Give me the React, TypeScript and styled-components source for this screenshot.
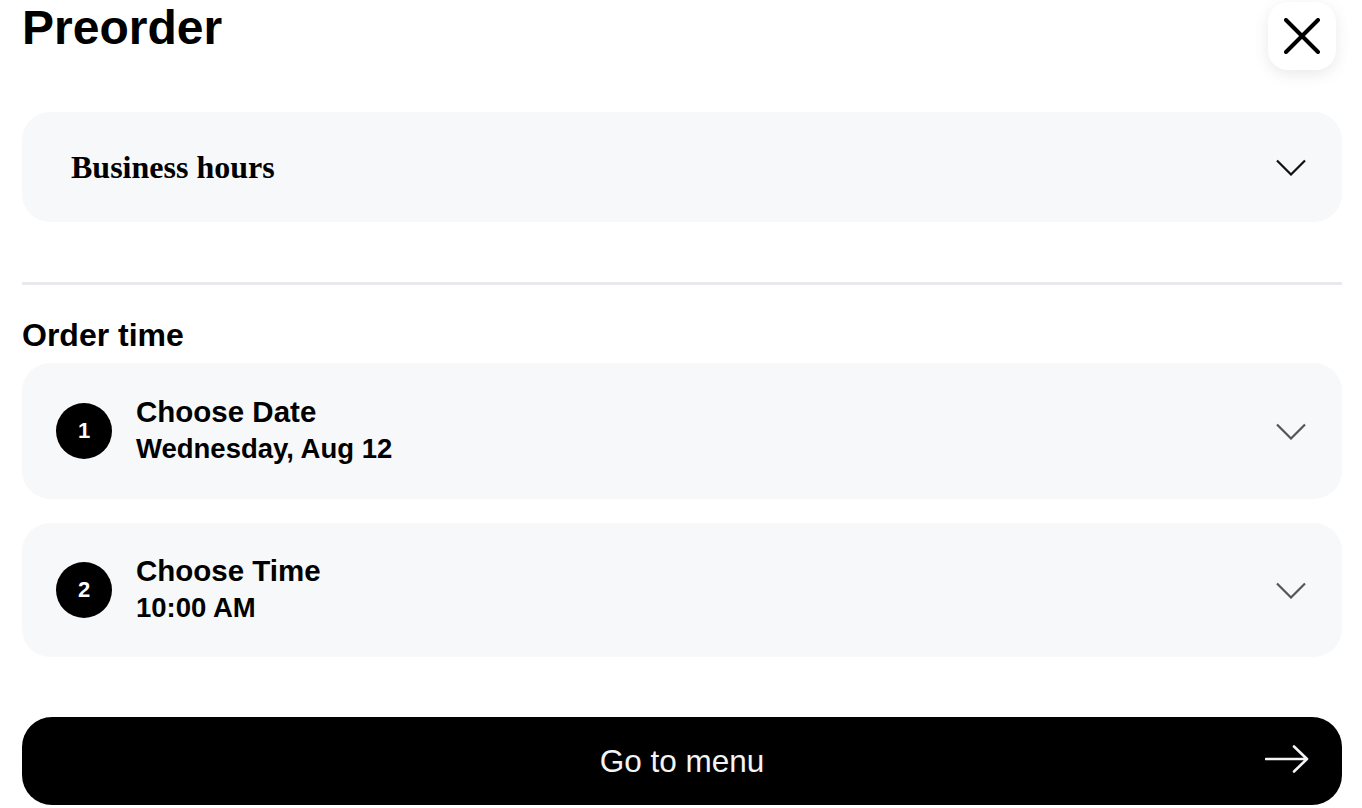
import styled, { createGlobalStyle } from "styled-components";

const GlobalStyle = createGlobalStyle`
  body {
    margin: 0;
    background: #ffffff;
    font-family: "Liberation Sans", Arial, sans-serif;
    color: #000000;
  }
`;

const Page = styled.div`
  padding: 0 20px 0 22px;
`;

const Header = styled.header`
  display: flex;
  justify-content: space-between;
  align-items: flex-start;
  height: 70px;
  margin-bottom: 42px;
`;

const Title = styled.h1`
  margin: 0;
  font-size: 48px;
  font-weight: 700;
  line-height: 55px;
`;

const CloseButton = styled.button`
  width: 68px;
  height: 68px;
  margin: 2px 6px 0 0;
  border: none;
  border-radius: 20px;
  background: #ffffff;
  box-shadow: 0 4px 16px rgba(0, 0, 0, 0.09);
  display: flex;
  align-items: center;
  justify-content: center;
  padding: 0;
  cursor: pointer;
`;

const Panel = styled.div<{ $height: number }>`
  display: flex;
  align-items: center;
  height: ${(p) => p.$height}px;
  box-sizing: border-box;
  background: #f7f8fa;
  border-radius: 28px;
  padding: 0 35px 0 34px;
`;

const HoursLabel = styled.span`
  flex: 1;
  padding-left: 15px;
  font-family: "Liberation Serif", "Times New Roman", serif;
  font-weight: 700;
  font-size: 32px;
`;

const Divider = styled.hr`
  margin: 60px 0 33px;
  border: none;
  height: 3px;
  background: #e8e9ec;
`;

const SectionTitle = styled.h2`
  margin: 0 0 10px;
  font-size: 32px;
  font-weight: 700;
  line-height: 35px;
`;

const StepList = styled.div`
  display: flex;
  flex-direction: column;
  gap: 24px;
`;

const StepNumber = styled.span`
  width: 56px;
  height: 56px;
  border-radius: 50%;
  background: #000000;
  color: #ffffff;
  font-size: 22px;
  font-weight: 700;
  display: flex;
  align-items: center;
  justify-content: center;
  flex-shrink: 0;
`;

const StepText = styled.div`
  flex: 1;
  margin-left: 24px;
  display: flex;
  flex-direction: column;
  padding-bottom: 3px;
`;

const StepLabel = styled.span`
  font-size: 29.5px;
  font-weight: 700;
  line-height: 36px;
`;

const StepValue = styled.span`
  margin-top: 3px;
  font-size: 27.5px;
  font-weight: 700;
  line-height: 32px;
`;

const MenuButton = styled.button`
  position: relative;
  margin-top: 60px;
  width: 100%;
  height: 88px;
  border: none;
  border-radius: 30px;
  background: #000000;
  color: #f3f4f6;
  font-family: "Liberation Sans", Arial, sans-serif;
  font-size: 31.5px;
  display: flex;
  align-items: center;
  justify-content: center;
  cursor: pointer;
`;

const ArrowWrap = styled.span`
  position: absolute;
  right: 33px;
  top: 28px;
  display: flex;
`;

const Chevron = ({ color }: { color: string }) => (
  <svg width="32" height="17" viewBox="0 0 32 17" fill="none">
    <path d="M2 1.5 L16 15.5 L30 1.5" stroke={color} strokeWidth="2.2" />
  </svg>
);

const steps = [
  { n: 1, label: "Choose Date", value: "Wednesday, Aug 12", h: 136 },
  { n: 2, label: "Choose Time", value: "10:00 AM", h: 134 },
];

export default function App() {
  return (
    <Page>
      <GlobalStyle />
      <Header>
        <Title>Preorder</Title>
        <CloseButton aria-label="Close">
          <svg width="36" height="36" viewBox="0 0 36 36" fill="none">
            <path
              d="M2 2 L34 34 M34 2 L2 34"
              stroke="#000"
              strokeWidth="4"
              strokeLinecap="round"
            />
          </svg>
        </CloseButton>
      </Header>

      <Panel $height={110}>
        <HoursLabel>Business hours</HoursLabel>
        <Chevron color="#111111" />
      </Panel>

      <Divider />

      <SectionTitle>Order time</SectionTitle>
      <StepList>
        {steps.map((s) => (
          <Panel key={s.n} $height={s.h}>
            <StepNumber>{s.n}</StepNumber>
            <StepText>
              <StepLabel>{s.label}</StepLabel>
              <StepValue>{s.value}</StepValue>
            </StepText>
            <Chevron color="#555555" />
          </Panel>
        ))}
      </StepList>

      <MenuButton>
        Go to menu
        <ArrowWrap>
          <svg width="44" height="28" viewBox="0 0 44 28" fill="none">
            <path
              d="M1 14 H42 M29 1.5 L42 14 L29 26.5"
              stroke="#f3f4f6"
              strokeWidth="2.6"
              strokeLinecap="round"
              strokeLinejoin="round"
            />
          </svg>
        </ArrowWrap>
      </MenuButton>
    </Page>
  );
}
